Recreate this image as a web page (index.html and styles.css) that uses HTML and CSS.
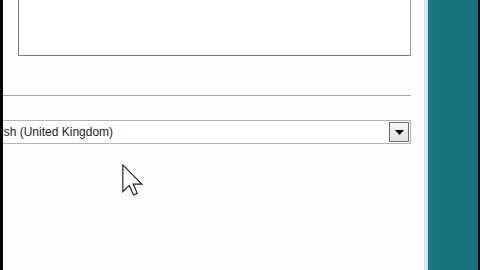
FILE: index.html
```html
<!DOCTYPE html>
<html>
<head>
<meta charset="utf-8">
<link rel="stylesheet" href="styles.css">
</head>
<body>
<div class="screen">
  <div class="edge-left"></div>
  <div class="dialog">
    <div class="textbox"></div>
    <div class="separator"></div>
    <div class="combo">
      <span class="combo-text">English (United Kingdom)</span>
      <span class="combo-btn">
        <svg width="9" height="5" viewBox="0 0 9 5"><path d="M0 0H9L4.5 5Z" fill="#000"/></svg>
      </span>
    </div>
    <svg class="cursor" width="21" height="32" viewBox="0 0 12.4 18.8">
      <path d="M0.5 0.5V16.2L4.3 12.6L6.8 18.3L9 17.3L6.6 11.8H11.7Z" fill="#fff" stroke="#222" stroke-width="0.7" stroke-linejoin="miter"/>
    </svg>
  </div>
  <div class="frame">
    <div class="frame-gap"></div>
    <div class="frame-glow"></div>
    <div class="frame-teal"></div>
    <div class="edge-right"></div>
  </div>
</div>
</body>
</html>
```

FILE: styles.css
```css
html, body {
  margin: 0;
  padding: 0;
  width: 480px;
  height: 270px;
  overflow: hidden;
  background: #fff;
}
.screen {
  display: flex;
  width: 480px;
  height: 270px;
}
.edge-left {
  width: 3px;
  background: #050505;
  flex: none;
}
.dialog {
  position: relative;
  width: 421px;
  flex: none;
  overflow: hidden;
  background: #fdfdfd;
  display: flex;
  flex-direction: column;
  padding-right: 13px;
  box-sizing: border-box;
}
.textbox {
  margin-top: -30px;
  margin-left: 15px;
  height: 84px;
  border: 1px solid #7b7b7b;
  border-right-color: #9a9a9a;
  background: #fff;
  flex: none;
}
.separator {
  margin-top: 39px;
  margin-left: -20px;
  height: 1px;
  background: #a5a5a5;
  flex: none;
}
.combo {
  margin-top: 24px;
  margin-left: -40px;
  height: 22px;
  border: 1px solid #b4b4b4;
  background: #fff;
  display: flex;
  align-items: center;
  justify-content: space-between;
  padding-left: 13px;
  padding-right: 1px;
  flex: none;
}
.combo-text {
  font-family: "Liberation Sans", Arial, sans-serif;
  font-size: 12px;
  color: #1e1e1e;
  line-height: 20px;
}
.combo-btn {
  width: 18px;
  height: 18px;
  border: 1px solid #6e6e6e;
  background: linear-gradient(#f6f6f6, #e2e2e2);
  display: flex;
  align-items: center;
  justify-content: center;
  padding-top: 1px;
  box-sizing: content-box;
  height: 17px;
}
.cursor {
  position: absolute;
  left: 119px;
  top: 164px;
}
.frame {
  flex: 1;
  display: flex;
}
.frame-gap {
  width: 1px;
  background: #d6dcdd;
}
.frame-glow {
  width: 3px;
  background: linear-gradient(90deg, #e6f3f6, #b9dbe3);
}
.frame-teal {
  flex: 1;
  background: linear-gradient(90deg, #1b7683 0%, #17717d 30%, #18727e 100%);
}
.edge-right {
  width: 2px;
  background: #0a0a0a;
}
```
